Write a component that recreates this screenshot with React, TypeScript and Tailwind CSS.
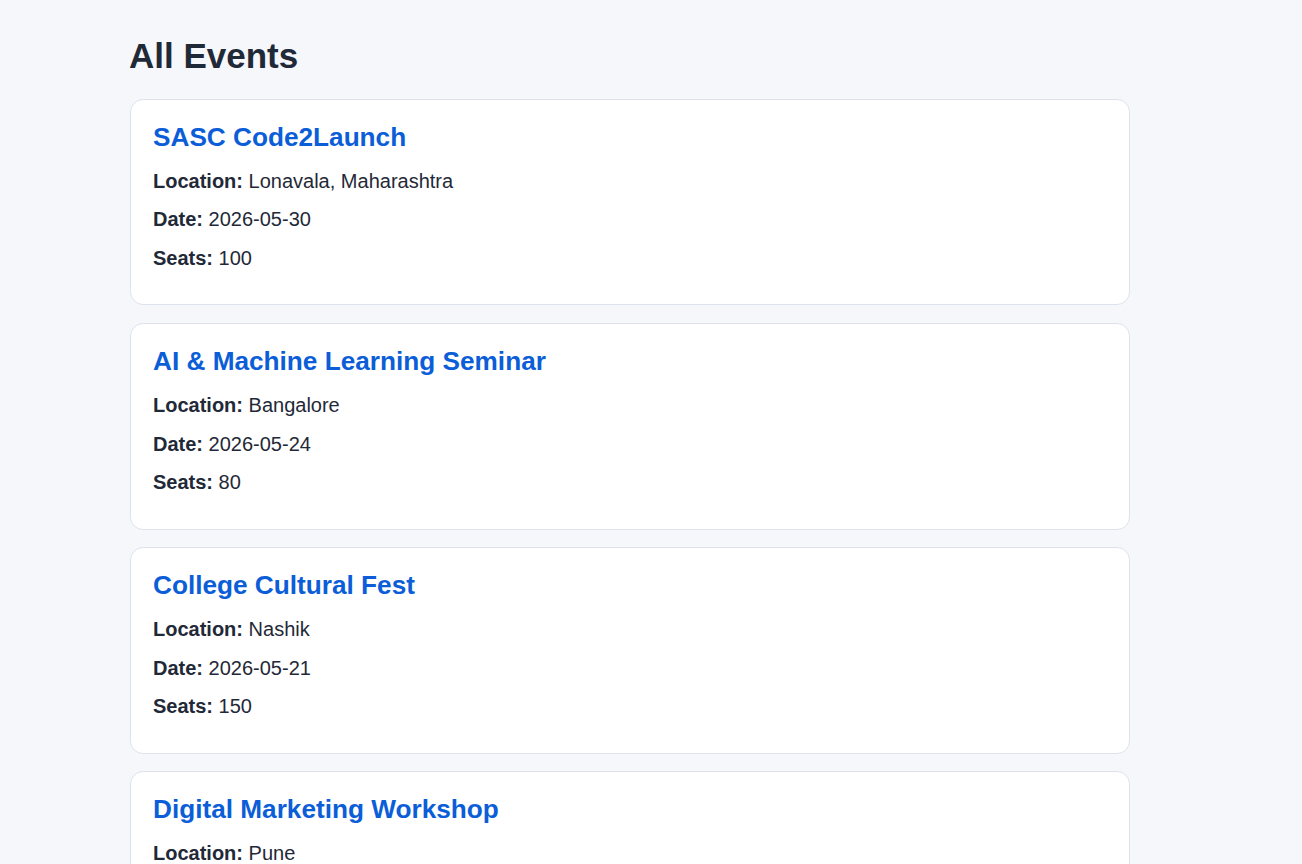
import React from 'react';

const events = [
  { id: 1, title: 'SASC Code2Launch', location: 'Lonavala, Maharashtra', date: '2026-05-30', seats: 100 },
  { id: 2, title: 'AI & Machine Learning Seminar', location: 'Bangalore', date: '2026-05-24', seats: 80 },
  { id: 3, title: 'College Cultural Fest', location: 'Nashik', date: '2026-05-21', seats: 150 },
  { id: 4, title: 'Digital Marketing Workshop', location: 'Pune', date: '2026-05-18', seats: 60 },
];

const App: React.FC = () => {
  return (
    <div className="h-[864px] overflow-hidden bg-[#f5f7fb] font-['Liberation_Sans',Arial,sans-serif] text-[#1f2937]">
      <div className="w-[1000px] ml-[130px] pt-[35px]">
        <h1 className="-ml-px text-[35px] leading-[41px] font-bold mb-[23px]">All Events</h1>
        {events.map((ev) => (
          <div key={ev.id} className="bg-white border border-[#dde3ec] rounded-[13px] pt-[22.15px] px-[22px] pb-[35.3px] mb-[17.7px]">
            <h2 className="text-[26.2px] leading-[30px] font-bold text-[#0b5ed7] mb-[17.6px]">{ev.title}</h2>
            <p className="text-[20px] leading-[22px] mb-[16.7px]"><strong>Location:</strong> {ev.location}</p>
            <p className="text-[20px] leading-[22px] mb-[16.7px]"><strong>Date:</strong> {ev.date}</p>
            <p className="text-[20px] leading-[22px]"><strong>Seats:</strong> {ev.seats}</p>
          </div>
        ))}
      </div>
    </div>
  );
};

export default App;
